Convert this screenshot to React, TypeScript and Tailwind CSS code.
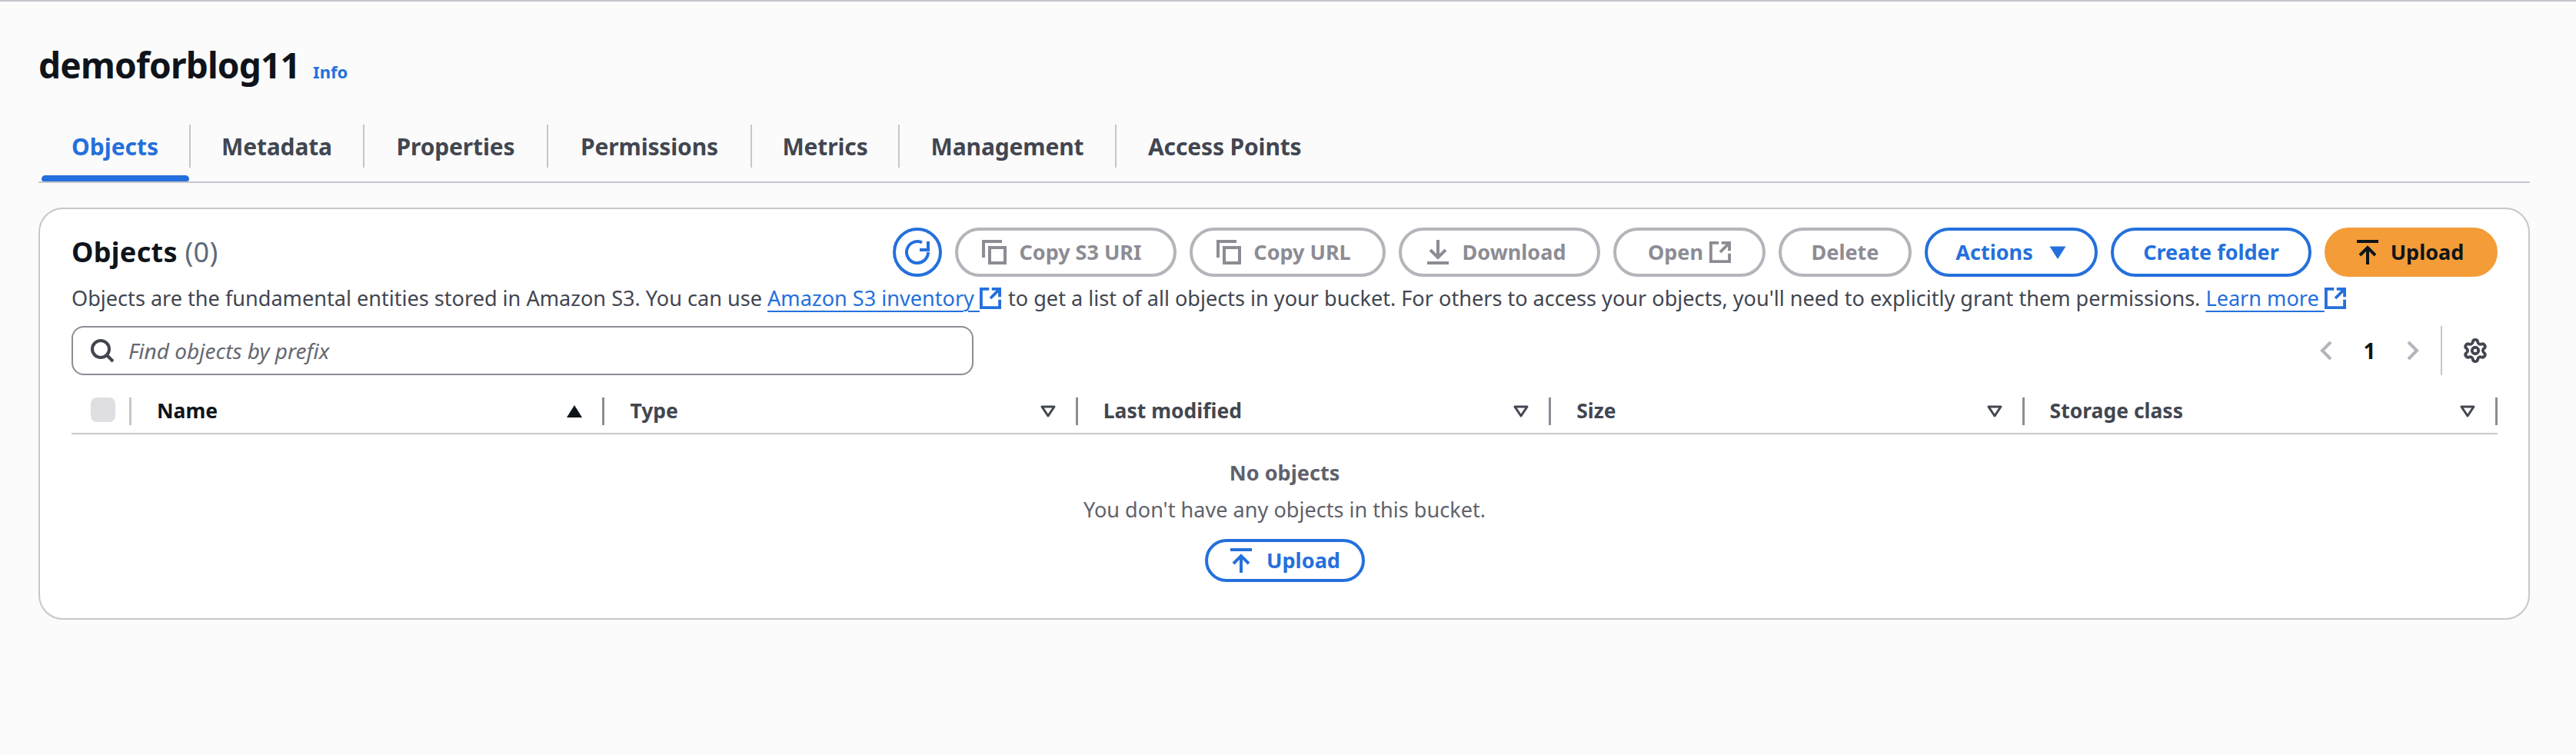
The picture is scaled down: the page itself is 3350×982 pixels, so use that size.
import type { ReactNode } from 'react';
import { Settings } from 'lucide-react';

const stroke = { fill: 'none', stroke: 'currentColor', strokeWidth: 2 };

function CopyIcon() {
  return (
    <svg viewBox="0 0 16 16" className="w-8 h-8 shrink-0" {...stroke}>
      <path d="M1 11.500V1h12" />
      <rect x="5" y="5" width="10" height="10" />
    </svg>
  );
}

function DownloadIcon() {
  return (
    <svg viewBox="0 0 16 16" className="w-8 h-8 shrink-0" {...stroke}>
      <path d="M1 15h14M8 0v11.500M3 6.500l5 5 5-5" />
    </svg>
  );
}

function UploadIcon() {
  return (
    <svg viewBox="0 0 16 16" className="w-8 h-8 shrink-0" {...stroke}>
      <path d="M1 1h14M8 16V5M3 10l5-5 5 5" />
    </svg>
  );
}

function ExternalIcon({ className }: { className?: string }) {
  return (
    <svg viewBox="0 0 16 16" className={className} fill="none" stroke="currentColor" strokeWidth={2.200}>
      <path d="M7 1.100H1.100v13.800h13.800V9M9 1.100h5.900V7M14.900 1.100 8 8" />
    </svg>
  );
}

function RefreshIcon() {
  return (
    <svg viewBox="0 0 16 16" className="w-8 h-8" {...stroke}>
      <path d="M15 8A7 7 0 1 1 11 1.700M15 1v5.500H9.500" />
    </svg>
  );
}

function FilterCaret() {
  return (
    <svg viewBox="0 0 20 16" className="w-5 h-4 text-[#424650]" fill="none" stroke="currentColor" strokeWidth={3} strokeLinejoin="round">
      <path d="M2 2h16l-8 12z" />
    </svg>
  );
}

function Pill({ children, kind = 'disabled', className }: { children: ReactNode; kind?: 'disabled' | 'normal' | 'primary'; className: string }) {
  const look = {
    disabled: 'border-[#b4b4bb] text-[#8c8c94]',
    normal: 'border-[#2470dc] text-[#2470dc]',
    primary: 'border-[#f39c38] bg-[#f39c38] text-[#0f141a]',
  }[kind];
  return (
    <button className={`flex items-center justify-center gap-5 h-16 rounded-[32px] border-4 font-bold text-[27px] ${look} ${className}`}>
      {children}
    </button>
  );
}

function Column({ label, active }: { label: string; active?: boolean }) {
  return (
    <div className="flex items-center justify-between h-9 pl-[33px] pr-[26px] border-r-[3px] border-[#8c8c94]">
      <span className={`font-bold text-[26.500px] ${active ? 'text-[#0f141a]' : 'text-[#424650]'}`}>{label}</span>
      {active ? (
        <svg viewBox="0 0 20 16" className="w-5 h-4 text-[#0f141a]" fill="currentColor">
          <path d="M10 0 20 16H0z" />
        </svg>
      ) : (
        <FilterCaret />
      )}
    </div>
  );
}

const tabs = [
  { label: 'Metadata', width: 'w-[226px]' },
  { label: 'Properties', width: 'w-[239px]' },
  { label: 'Permissions', width: 'w-[265px]' },
  { label: 'Metrics', width: 'w-[192px]' },
  { label: 'Management', width: 'w-[282px]' },
];

export default function App() {
  return (
    <div className="w-[3350px] h-[982px] bg-[#fbfbfb] border-t-2 border-[#c6c6cd] pl-[50px] pr-[60px] font-['Noto_Sans',sans-serif] text-[27.100px] text-[#424650] overflow-hidden">
      {/* Page title */}
      <div className="flex items-baseline gap-[17px] mt-[52px] h-[60px]">
        <h1 className="font-bold text-[46px] tracking-[-0.800px] leading-[60px] text-[#0f141a]">demoforblog11</h1>
        <a className="font-bold text-[22px] text-[#2470dc]">Info</a>
      </div>

      {/* Tabs */}
      <div className="flex items-start h-[74px] mt-[48px] border-b-2 border-[#c6c6cd] box-content">
        <div className="relative w-[198px] h-[56px] pl-[43px] border-r-2 border-[#c6c6cd] flex items-center font-bold text-[30px] text-[#2470dc]">
          Objects
          <div className="absolute left-[4px] right-0 top-[66px] h-2 rounded-t-md rounded-b-sm bg-[#2470dc]" />
        </div>
        {tabs.map(t => (
          <div key={t.label} className={`h-[56px] ${t.width} border-r-2 border-[#c6c6cd] flex items-center justify-center font-bold text-[30px] tracking-[-0.150px]`}>
            {t.label}
          </div>
        ))}
        <div className="h-[56px] pl-[41px] flex items-center font-bold text-[30px] tracking-[-0.150px]">Access Points</div>
      </div>

      {/* Objects card */}
      <section className="mt-8 h-[536px] rounded-[32px] border-2 border-[#c6c6cd] bg-white pt-[24px] pl-[41px] pr-[40px]">
        <div className="flex items-center">
          <h2 className="font-bold text-[36px] tracking-[0.300px] text-[#0f141a]">
            Objects <span className="font-normal text-[#5f6b7a]">(0)</span>
          </h2>
          <div className="ml-auto flex items-center gap-[17px]">
            <button className="flex items-center justify-center w-16 h-16 rounded-full border-4 border-[#2470dc] text-[#2470dc]">
              <RefreshIcon />
            </button>
            <Pill className="w-[288px] pr-[10px] !gap-4"><CopyIcon />Copy S3 URI</Pill>
            <Pill className="w-[255px] pr-[10px] !gap-4"><CopyIcon />Copy URL</Pill>
            <Pill className="w-[262px] pr-[10px] !gap-4"><DownloadIcon />Download</Pill>
            <Pill className="w-[198px] !gap-2">Open<ExternalIcon className="w-7 h-7" /></Pill>
            <Pill className="w-[173px]">Delete</Pill>
            <Pill kind="normal" className="w-[225px]">
              Actions
              <svg viewBox="0 0 16 16" className="w-6 h-6" fill="currentColor"><path d="M1 3h14L8 14z" /></svg>
            </Pill>
            <Pill kind="normal" className="w-[261px]">Create folder</Pill>
            <Pill kind="primary" className="w-[225px] !gap-[14px] pr-1"><UploadIcon />Upload</Pill>
          </div>
        </div>

        <p className="mt-2 h-10 leading-10 whitespace-nowrap">
          Objects are the fundamental entities stored in Amazon S3. You can use{' '}
          <a className="text-[#2470dc] underline decoration-2 underline-offset-[6px]">Amazon S3 inventory&nbsp;</a>
          <ExternalIcon className="inline w-7 h-7 text-[#2470dc] align-[-4px] mr-[9px]" />
          to get a list of all objects in your bucket. For others to access your objects, you'll need to explicitly grant them permissions.{' '}
          <a className="text-[#2470dc] underline decoration-2 underline-offset-[6px]">Learn more&nbsp;</a>
          <ExternalIcon className="inline w-7 h-7 text-[#2470dc] align-[-4px]" />
        </p>

        <div className="flex items-center mt-4 h-16">
          <div className="flex items-center gap-[18px] w-[1173px] h-16 pl-[22px] rounded-2xl border-2 border-[#8c8c94]">
            <svg viewBox="0 0 16 16" className="w-8 h-8 text-[#424650]" {...stroke}>
              <circle cx="7" cy="7" r="5.500" />
              <path d="m11 11 4 4" />
            </svg>
            <span className="italic text-[28px] text-[#656871]">Find objects by prefix</span>
          </div>
          <div className="ml-auto flex items-center h-16">
            <svg viewBox="0 0 16 26" className="w-4 h-[26px] text-[#b4b4bb]" fill="none" stroke="currentColor" strokeWidth={4}><path d="M14 2 3 13l11 11" /></svg>
            <span className="w-[97px] text-center font-bold text-[28px] text-[#0f141a]">1</span>
            <svg viewBox="0 0 16 26" className="w-4 h-[26px] text-[#b4b4bb]" fill="none" stroke="currentColor" strokeWidth={4}><path d="m2 2 11 11L2 24" /></svg>
            <div className="w-[2px] h-16 bg-[#c6c6cd] ml-[28px]" />
            <Settings size={34} strokeWidth={2.700} className="ml-[26px] mr-[12px] text-[#424650]" />
          </div>
        </div>

        {/* Table header */}
        <div className="mt-[29px] pb-[10px] border-b-2 border-[#c6c6cd] grid grid-cols-[78px_repeat(5,1fr)]">
          <div className="flex items-start h-9 pl-[25px] border-r-[3px] border-[#c6c6cd]">
            <div className="w-8 h-8 rounded-lg bg-[#dedee3]" />
          </div>
          <Column label="Name" active />
          <Column label="Type" />
          <Column label="Last modified" />
          <Column label="Size" />
          <Column label="Storage class" />
        </div>

        {/* Empty state */}
        <div className="flex flex-col items-center">
          <div className="mt-[30px] h-10 leading-10 font-bold text-[#5f626c]">No objects</div>
          <div className="mt-2 h-10 leading-10 text-[#5f626c]">You don't have any objects in this bucket.</div>
          <button className="mt-[18px] flex items-center justify-center gap-[17px] w-[208px] h-14 rounded-[28px] border-4 border-[#2470dc] font-bold text-[#2470dc]">
            <UploadIcon />Upload
          </button>
        </div>
      </section>
    </div>
  );
}
